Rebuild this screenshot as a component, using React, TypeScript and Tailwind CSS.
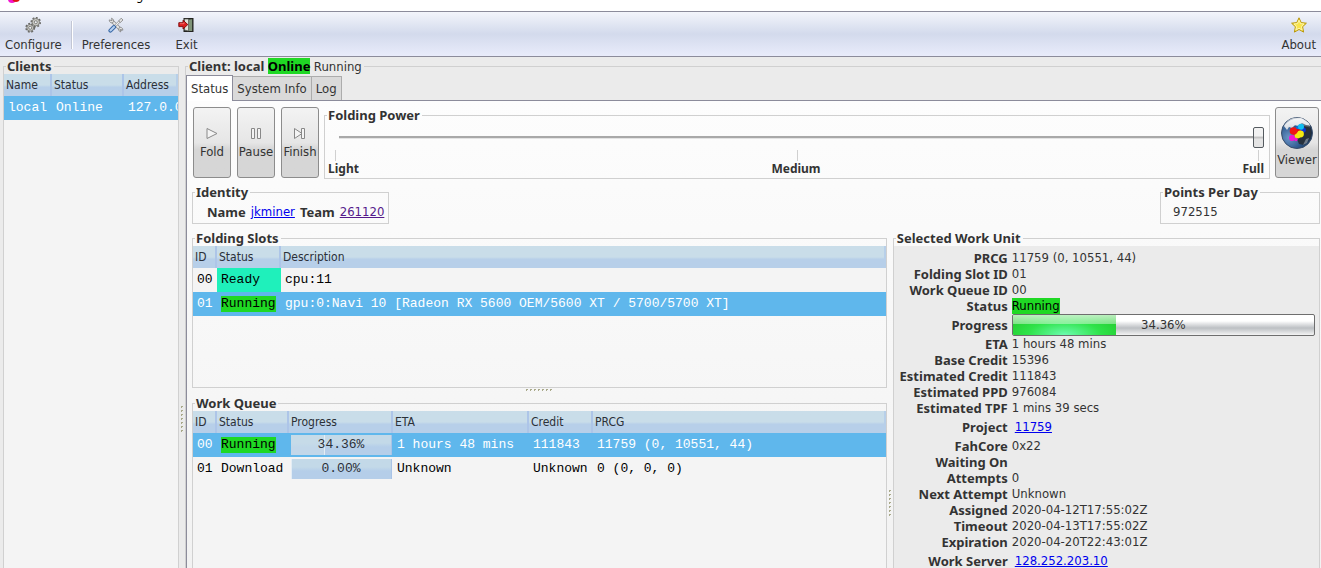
import type { ReactNode } from "react";

const BOLD = "font-['Noto_Sans','DejaVu_Sans',sans-serif] font-bold";
const HEAD_ROW = "h-[22px] bg-linear-to-b from-[#c9dde9] from-50% to-[#b7cfe9] to-60% text-xs text-[#2b3038]";
const TH = "truncate border-r-2 border-[#adc5e8] pl-0.5 text-left font-normal last:border-[#b7cfe9]";
const TABLE = "w-full table-fixed border-separate border-spacing-0";
const MONO = "font-['Liberation_Mono',monospace]";
const BUTTON =
  "flex h-[71px] flex-col items-center rounded-[3px] border border-[#8c8c8c] bg-linear-to-b from-[#f3f3f3] from-0% via-[#e6e6e6] via-50% to-[#d6d6d6] to-60%";

function Group({ title, className, children }: { title: ReactNode; className?: string; children?: ReactNode }) {
  return (
    <fieldset className={`min-w-0 border border-[#d0d0d0] ${className ?? ""}`}>
      <legend className={`ml-0.5 pr-0.5 pl-px leading-4 whitespace-nowrap ${BOLD}`}>{title}</legend>
      {children}
    </fieldset>
  );
}

function Gear({ x, y, r }: { x: number; y: number; r: number }) {
  return (
    <g transform={`translate(${x} ${y})`}>
      <circle r={r} fill="none" stroke="#6b6b68" strokeWidth="2" strokeDasharray="1.8 1.5" />
      <circle r={r - 0.6} fill="#c9c9c4" stroke="#777773" strokeWidth="0.9" />
      <circle r="1.5" fill="#eef0f6" stroke="#777773" strokeWidth="0.9" />
    </g>
  );
}

function GearsIcon() {
  return (
    <svg className="size-4" viewBox="0 0 16 16" aria-hidden="true">
      <Gear x={5.2} y={10.8} r={4} />
      <Gear x={10.8} y={5.2} r={4.3} />
    </svg>
  );
}

function ToolsIcon() {
  return (
    <svg className="size-4" viewBox="0 0 16 16" aria-hidden="true" strokeLinecap="round">
      <path d="M4.5 4.5 12.5 12.5" stroke="#888" strokeWidth="3.2" />
      <path d="M4.5 4.5 12.5 12.5" stroke="#e8e8e8" strokeWidth="1.8" />
      <path d="M1.2 3.3C1.3 5.4 3.2 6.4 5 5.6 6.2 4.2 5.6 1.8 3.5 1.2L4 3.3Z" fill="#e4e4e4" stroke="#808080" strokeWidth=".8" />
      <path d="M14.9 12.8C14.8 10.7 12.8 9.8 11.2 10.7 10.2 12.4 10.7 14.3 12.7 14.9L12.3 12.8Z" fill="#e4e4e4" stroke="#808080" strokeWidth=".8" />
      <path d="M6.5 9.5 12 4" stroke="#808080" strokeWidth="2.4" />
      <path d="M6.5 9.5 12 4" stroke="#f2f2f2" strokeWidth="1.2" />
      <path d="M11 3.6 13.2 1.2 15 3 12.6 5.2Z" fill="#e4e4e4" stroke="#808080" strokeWidth=".8" />
      <path d="M2.4 13.6 6 10" stroke="#3465a4" strokeWidth="4" />
      <path d="M2.5 13.5 6 10" stroke="#b4cff0" strokeWidth="2.1" />
    </svg>
  );
}

function ExitIcon() {
  return (
    <svg className="size-4" viewBox="0 0 16 16" aria-hidden="true">
      <rect x="6" y="1.5" width="9" height="13" fill="#3c443c" stroke="#23231f" />
      <path d="M10 3 14 2.2V14H10Z" fill="#7f9377" />
      <path d="M6.5 2H10.5V14L6.5 13Z" fill="#e2e4dd" stroke="#55554f" strokeWidth=".7" />
      <path d="M.8 5.7H5V3.2L9.8 7.6 5 12V9.6H.8Z" fill="#dd1f1f" stroke="#7d0606" strokeWidth=".9" />
      <path d="M1.8 6.7H6V5.3" fill="none" stroke="#ff8a8a" strokeWidth=".7" />
    </svg>
  );
}

function StarIcon() {
  return (
    <svg className="size-4" viewBox="0 0 16 16" aria-hidden="true">
      <path d="M8 .8 10.2 5.6 15.4 6.2 11.6 9.8 12.6 15.1 8 12.5 3.4 15.1 4.4 9.8.6 6.2 5.8 5.6Z" fill="#f9e44c" stroke="#b8960c" strokeLinejoin="round" />
      <path d="M8 3.2 9.5 6.6 13 7 10.4 9.4 11.1 13 8 11.2 4.9 13 5.6 9.4 3 7 6.5 6.6Z" fill="none" stroke="#fdf6b0" strokeWidth=".9" />
    </svg>
  );
}

function GlobeIcon() {
  return (
    <svg className="size-8" viewBox="0 0 32 32" aria-hidden="true">
      <defs>
        <radialGradient id="globe" cx=".25" cy=".65" r=".8">
          <stop offset="0" stopColor="#6d97c8" />
          <stop offset=".5" stopColor="#2f5a90" />
          <stop offset="1" stopColor="#14273f" />
        </radialGradient>
        <linearGradient id="gloss" x1="0" y1="0" x2="0" y2="1">
          <stop offset="0" stopColor="#fff" stopOpacity=".75" />
          <stop offset="1" stopColor="#fff" stopOpacity=".1" />
        </linearGradient>
      </defs>
      <circle cx="16" cy="16" r="15.5" fill="url(#globe)" stroke="#3a4f6c" />
      <path d="M3 9C7 3 14 .8 21 1.5L28 6 29 9 25 8 21 6 17 9 14 8 11 11 8 10 6 13Z" fill="#d9dee4" />
      <path d="M18 9 28 8.500C31 13 31 19 28 23L23 28 18 27 15 20Z" fill="#27313d" />
      <path d="M25 22 28 21 26 26 22 28Z" fill="#6d7a88" />
      <path d="M2 11C5 2 12 .8 16 .8S27 2 30 11C22 8 10 8 2 11Z" fill="url(#gloss)" />
      <circle cx="17.500" cy="11" r="2.500" fill="#0c6fe0" />
      <circle cx="22" cy="13" r="2.800" fill="#0a34d8" />
      <circle cx="20" cy="9.800" r="3" fill="#10bff2" />
      <circle cx="16.500" cy="16" r="4" fill="#d11" />
      <circle cx="19.500" cy="17" r="3.400" fill="#f4ea12" />
      <circle cx="16.500" cy="18.500" r="3" fill="#f4ea12" />
      <circle cx="12.500" cy="14" r="3.800" fill="#f01414" />
      <circle cx="11" cy="21" r="3" fill="#f315cf" />
      <circle cx="15" cy="22.500" r="1.700" fill="#f315cf" />
    </svg>
  );
}

function ToolButton({ icon, label }: { icon: ReactNode; label: string }) {
  return (
    <button type="button" className="flex flex-col items-center gap-1 leading-4">
      {icon}
      {label}
    </button>
  );
}

function ControlButton({ label, path }: { label: string; path: string }) {
  return (
    <button type="button" className={`${BUTTON} w-[38px] pt-[17px]`}>
      <svg className="size-4" viewBox="0 0 16 16" fill="#f4f4f4" stroke="#888" aria-hidden="true">
        <path d={path} />
      </svg>
      <span className="mt-[3px] leading-4">{label}</span>
    </button>
  );
}

function VerticalGrip() {
  return (
    <div className="flex w-1.5 shrink-0 flex-col items-center gap-0.5">
      {[0, 1, 2, 3, 4, 5, 6].map((dot) => (
        <i key={dot} className="size-0.5 border-t border-l border-[#a9a98a]" />
      ))}
    </div>
  );
}

function CellProgress({ value, text }: { value: number; text: string }) {
  return (
    <div className="relative mr-px ml-[2px] h-5 border-r border-[#a9c3e6] bg-linear-to-b from-[#c3d9e8] from-40% to-[#b5cee9] to-60% text-center leading-5 text-[#2b3038]">
      <div className="absolute inset-y-0 left-0 border-r border-[#e3edf5] bg-[#c8dce8]/70" style={{ width: `${value}%` }} />
      <span className="relative">{text}</span>
    </div>
  );
}

const running = <span className="inline-block bg-[#1fd824] leading-4 text-black">Running</span>;

const link = (text: string) => (
  <a href="#" className="ml-[3px] text-[#0000ee] underline">
    {text}
  </a>
);

const details: { label: string; value: ReactNode; tall?: boolean }[] = [
  { label: "PRCG", value: "11759 (0, 10551, 44)" },
  { label: "Folding Slot ID", value: "01" },
  { label: "Work Queue ID", value: "00" },
  { label: "Status", value: <span className="inline-block bg-[#1fd824] text-black">Running</span> },
  {
    label: "Progress",
    tall: true,
    value: (
      <div
        role="progressbar"
        aria-label="Progress"
        aria-valuenow={34.36}
        className="relative mr-1 h-[22px] overflow-hidden rounded-[2px] border border-[#6e6e6e] bg-linear-to-b from-white from-30% via-[#bcbfc3] via-65% to-[#f4f4f4] text-center leading-5"
      >
        <div className="absolute inset-y-0 left-0 bg-radial-[at_50%_100%] from-[#6dfcb0] via-[#2fe34a] via-50% to-[#1fc425]" style={{ width: "34.36%" }}>
          <div className="h-[9px] bg-linear-to-b from-white/70 to-white/40" />
        </div>
        <span className="relative">34.36%</span>
      </div>
    ),
  },
  { label: "ETA", value: "1 hours 48 mins" },
  { label: "Base Credit", value: "15396" },
  { label: "Estimated Credit", value: "111843" },
  { label: "Estimated PPD", value: "976084" },
  { label: "Estimated TPF", value: "1 mins 39 secs" },
  { label: "Project", value: link("11759"), tall: true },
  { label: "FahCore", value: "0x22" },
  { label: "Waiting On", value: "" },
  { label: "Attempts", value: "0" },
  { label: "Next Attempt", value: "Unknown" },
  { label: "Assigned", value: "2020-04-12T17:55:02Z" },
  { label: "Timeout", value: "2020-04-13T17:55:02Z" },
  { label: "Expiration", value: "2020-04-20T22:43:01Z" },
  { label: "Work Server", value: link("128.252.203.10"), tall: true },
];

function ClientsPanel() {
  return (
    <Group title="Clients" className="w-[176px] shrink-0 border-b-0">
      <div className="h-full overflow-hidden bg-[#f4f4f4]">
        <table className={TABLE}>
          <colgroup>
            <col className="w-12" />
            <col className="w-[72px]" />
            <col />
          </colgroup>
          <thead>
            <tr className={HEAD_ROW}>
              <th className={TH}>Name</th>
              <th className={TH}>Status</th>
              <th className={TH}>Address</th>
            </tr>
          </thead>
          <tbody className={MONO}>
            <tr className="h-6 bg-[#5fb7ec] whitespace-nowrap text-white">
              <td className="pl-1">local</td>
              <td className="pl-1">Online</td>
              <td className="overflow-hidden pl-1">127.0.0.1</td>
            </tr>
          </tbody>
        </table>
      </div>
    </Group>
  );
}

function FoldingPower() {
  return (
    <Group title="Folding Power" className="h-[72px] flex-1">
      <div className="px-[5px]">
        <input
          type="range"
          aria-label="Folding Power"
          min={0}
          max={100}
          defaultValue={100}
          className="mt-1 block h-[21px] w-full appearance-none bg-[linear-gradient(#a9a9a9_2px,#e4e4e4_2px)] bg-[length:calc(100%-9px)_3px] bg-right bg-no-repeat [&::-webkit-slider-thumb]:h-[21px] [&::-webkit-slider-thumb]:w-[11px] [&::-webkit-slider-thumb]:appearance-none [&::-webkit-slider-thumb]:rounded-[2px] [&::-webkit-slider-thumb]:border [&::-webkit-slider-thumb]:border-[#555b60] [&::-webkit-slider-thumb]:bg-[linear-gradient(#f2f2f2_40%,#c4c4c4_50%,#e4e4e4_60%)]"
        />
        <div className="mt-0.5 flex justify-between px-[5px]">
          <i className="h-[11px] w-px bg-[#d0d0d0]" />
          <i className="h-[11px] w-px bg-[#d0d0d0]" />
          <i className="h-[11px] w-px bg-[#d0d0d0]" />
        </div>
        <div className={`-ml-0.5 grid grid-cols-3 text-xs leading-4 ${BOLD}`}>
          <span>Light</span>
          <span className="text-center">Medium</span>
          <span className="text-right">Full</span>
        </div>
      </div>
    </Group>
  );
}

function FoldingSlots() {
  return (
    <Group title="Folding Slots" className="h-[158px] shrink-0">
      <div className="h-full bg-[#f4f4f4]">
        <table className={TABLE}>
          <colgroup>
            <col className="w-6" />
            <col className="w-16" />
            <col />
          </colgroup>
          <thead>
            <tr className={HEAD_ROW}>
              <th className={TH}>ID</th>
              <th className={TH}>Status</th>
              <th className={TH}>Description</th>
            </tr>
          </thead>
          <tbody className={`${MONO} whitespace-nowrap`}>
            <tr className="h-6 text-black">
              <td className="pl-1">00</td>
              <td className="bg-[#1ff0bb] pl-1">Ready</td>
              <td className="pl-1">cpu:11</td>
            </tr>
            <tr className="h-6 bg-[#5fb7ec] text-white">
              <td className="pl-1">01</td>
              <td className="pl-1">{running}</td>
              <td className="pl-1">gpu:0:Navi 10 [Radeon RX 5600 OEM/5600 XT / 5700/5700 XT]</td>
            </tr>
          </tbody>
        </table>
      </div>
    </Group>
  );
}

function WorkQueue() {
  return (
    <Group title="Work Queue" className="flex-1 border-b-0">
      <div className="h-full bg-[#f4f4f4]">
        <table className={TABLE}>
          <colgroup>
            <col className="w-6" />
            <col className="w-[72px]" />
            <col className="w-[104px]" />
            <col className="w-[136px]" />
            <col className="w-16" />
            <col />
          </colgroup>
          <thead>
            <tr className={HEAD_ROW}>
              {["ID", "Status", "Progress", "ETA", "Credit", "PRCG"].map((name) => (
                <th key={name} className={TH}>
                  {name}
                </th>
              ))}
            </tr>
          </thead>
          <tbody className={`${MONO} whitespace-nowrap`}>
            <tr className="h-6 bg-[#5fb7ec] text-white">
              <td className="pl-1">00</td>
              <td className="pl-1">{running}</td>
              <td>
                <CellProgress value={34} text="34.36%" />
              </td>
              <td className="pl-1">1 hours 48 mins</td>
              <td className="pl-1">111843</td>
              <td className="pl-1">11759 (0, 10551, 44)</td>
            </tr>
            <tr className="h-6 text-black">
              <td className="pl-1">01</td>
              <td className="pl-1">Download</td>
              <td>
                <CellProgress value={0} text="0.00%" />
              </td>
              <td className="pl-1">Unknown</td>
              <td className="pl-1">Unknown</td>
              <td className="pl-1">0 (0, 0, 0)</td>
            </tr>
          </tbody>
        </table>
      </div>
    </Group>
  );
}

function SelectedWorkUnit() {
  return (
    <Group title="Selected Work Unit" className="mr-px flex-[426] border-b-0">
      <dl className="grid h-full grid-cols-[114px_1fr] content-start gap-x-1 bg-[#ebebeb] pt-1">
        {details.map(({ label, value, tall }) => (
          <div key={label} className={`col-span-2 grid grid-cols-subgrid items-center ${tall ? "h-[22px]" : "h-4"} leading-4`}>
            <dt className={`text-right whitespace-nowrap ${BOLD}`}>{label}</dt>
            <dd>{value}</dd>
          </div>
        ))}
      </dl>
    </Group>
  );
}

export default function App() {
  return (
    <div className="flex h-screen flex-col overflow-hidden bg-[#ebebeb] font-['DejaVu_Sans_Condensed','DejaVu_Sans',sans-serif] text-[13px] text-[#333]">
      <header className="flex h-[11px] shrink-0 items-end gap-[116px] overflow-hidden bg-white pl-2 text-black">
        <svg className="h-[11px] w-3" viewBox="0 0 12 11" aria-hidden="true">
          <circle cx="4" cy="-1" r="4" fill="#f315cf" />
          <circle cx="8" cy="-2" r="4" fill="#d11" />
        </svg>
        <span className="pb-[7px] leading-4">ge</span>
      </header>

      <nav className="flex h-[46px] shrink-0 items-start border-y border-[#8c8c9b] bg-linear-to-b from-[#f3f5fb] from-0% via-[#d3daec] via-50% to-[#e9ecfb] px-[5px] pt-[5px]">
        <ToolButton icon={<GearsIcon />} label="Configure" />
        <div className="mx-[9px] mt-1 h-7 w-0.5 border-l border-[#c2c6d4] bg-white" />
        <ToolButton icon={<ToolsIcon />} label="Preferences" />
        <div className="w-[25px]" />
        <ToolButton icon={<ExitIcon />} label="Exit" />
        <div className="flex-1" />
        <ToolButton icon={<StarIcon />} label="About" />
      </nav>

      <main className="flex min-h-0 flex-1 pt-px pl-[3px]">
        <ClientsPanel />
        <div className="flex items-center pt-[212px]">
          <VerticalGrip />
        </div>

        <Group
          className="flex flex-1 flex-col border-r-0 border-b-0"
          title={
            <>
              Client: local <span className="inline-block bg-[#1fd824] text-black">Online</span>{" "}
              <span className="font-['DejaVu_Sans_Condensed','DejaVu_Sans',sans-serif] font-normal">Running</span>
            </>
          }
        >
          <div className="flex h-full flex-col">
            <div role="tablist" className="flex h-[25px] shrink-0 items-end">
              <button type="button" role="tab" aria-selected="true" className="z-10 h-[26px] self-start border border-b-0 border-[#8c8c9b] bg-white px-1">
                Status
              </button>
              <button type="button" role="tab" aria-selected="false" className="h-6 border border-b-0 border-l-0 border-[#acacac] bg-[#dadada] px-1">
                System Info
              </button>
              <button type="button" role="tab" aria-selected="false" className="h-6 border border-b-0 border-l-0 border-[#acacac] bg-[#dadada] px-1">
                Log
              </button>
            </div>

            <div className="flex min-h-0 flex-1 flex-col border-t border-l border-[#8c8c9b] bg-linear-to-b from-[#fdfdfd] to-[#f2f2f2] pl-[5px]">
              <div className="flex shrink-0 gap-[5px] pt-1.5 pr-[2px] pl-px">
                <div className="flex gap-1.5">
                  <ControlButton label="Fold" path="M3 3.5 13 8.5 3 13.5Z" />
                  <ControlButton label="Pause" path="M3.5 3.5H6.5V13.5H3.5ZM9.5 3.5H12.5V13.5H9.5Z" />
                  <ControlButton label="Finish" path="M2.5 3.5 10 8.5 2.5 13.5ZM9.5 3.5H12.5V13.5H9.5Z" />
                </div>
                <FoldingPower />
                <button type="button" className={`${BUTTON} w-11 pt-[9px]`}>
                  <GlobeIcon />
                  <span className="mt-[3px] leading-4">Viewer</span>
                </button>
              </div>

              <div className="mt-[5px] flex h-10 shrink-0 items-start justify-between pr-px">
                <Group title="Identity" className="h-10">
                  <div className="flex gap-[5px] pt-1 pr-1 pl-[14px] leading-4">
                    <span className={BOLD}>Name</span>
                    <a href="#" className="text-[#0000ee] underline">
                      jkminer
                    </a>
                    <span className={BOLD}>Team</span>
                    <a href="#" className="text-[#551a8b] underline">
                      261120
                    </a>
                  </div>
                </Group>
                <Group title="Points Per Day" className="h-10 w-40">
                  <div className="pt-1 pl-3 leading-4">972515</div>
                </Group>
              </div>

              <div className="mt-1.5 flex min-h-0 flex-1">
                <div className="flex min-w-0 flex-[696] flex-col">
                  <FoldingSlots />
                  <div className="flex h-[7px] shrink-0 justify-center gap-0.5 pt-px">
                    {[0, 1, 2, 3, 4, 5, 6].map((dot) => (
                      <i key={dot} className="size-0.5 border-t border-l border-[#a9a98a]" />
                    ))}
                  </div>
                  <WorkQueue />
                </div>
                <div className="flex items-center pt-[207px]">
                  <VerticalGrip />
                </div>
                <SelectedWorkUnit />
              </div>
            </div>
          </div>
        </Group>
      </main>
    </div>
  );
}
